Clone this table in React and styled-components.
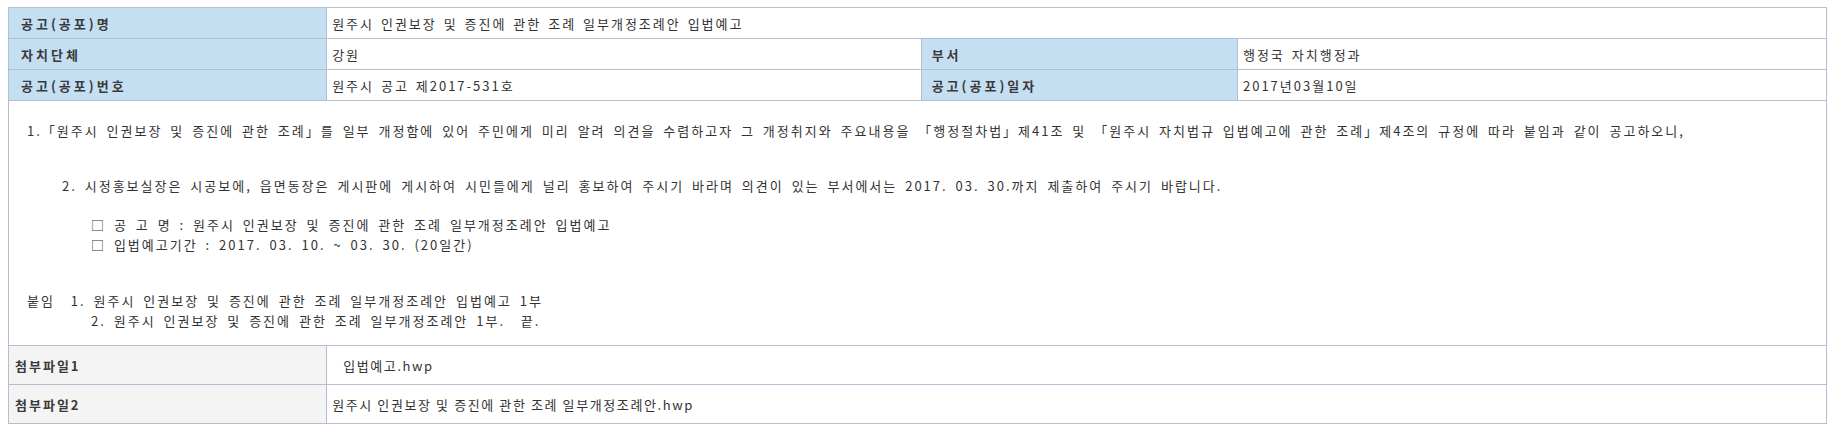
import styled, { createGlobalStyle } from "styled-components"

const GlobalStyle = createGlobalStyle`
  body {
    margin: 7px 8px;
    background: #ffffff;
    font-family: "Noto Sans CJK KR", "Noto Sans", sans-serif;
    color: #333333;
  }
`

const Sheet = styled.table`
  width: 100%;
  border-collapse: collapse;
  table-layout: fixed;
  border: 1px solid #b3bfd1;
`

const Label = styled.th`
  height: 30px;
  padding: 0 0 0 ${(p) => p.$pad || 12}px;
  border: 1px solid #b3bfd1;
  background: ${(p) => (p.$grey ? "#f4f4f4" : "#c5dff2")};
  color: #3a3a3a;
  font-size: 13px;
  font-weight: 700;
  text-align: left;
  letter-spacing: ${(p) => (p.$grey ? 2 : 3)}px;
`

const Value = styled.td`
  height: 30px;
  padding: 0 0 0 ${(p) => p.$pad || 5}px;
  border: 1px solid #b3bfd1;
  color: #333333;
  font-size: 13px;
  letter-spacing: ${(p) => (p.$file ? 1.6 : 2)}px;
  word-spacing: ${(p) => (p.$file ? 0 : 2)}px;
  white-space: nowrap;
`

const FileRow = styled.tr`
  th,
  td {
    height: 38px;
  }
`

const Body = styled.td`
  padding: 20px 18px 14px;
  border: 1px solid #b3bfd1;
  font-size: 13px;
  color: #333333;
  letter-spacing: 2px;
  word-spacing: 3px;
`

const Line = styled.p`
  margin: ${(p) => p.$top || 0}px 0 0 ${(p) => p.$indent || 0}px;
  line-height: 20px;
  white-space: pre;
`

export default function App() {
  return (
    <>
      <GlobalStyle />
      <Sheet>
        <colgroup>
          <col style={{ width: "17.5%" }} />
          <col style={{ width: "32.7%" }} />
          <col style={{ width: "17.4%" }} />
          <col style={{ width: "32.4%" }} />
        </colgroup>
        <tbody>
          <tr>
            <Label>공고(공포)명</Label>
            <Value colSpan={3}>원주시 인권보장 및 증진에 관한 조례 일부개정조례안 입법예고</Value>
          </tr>
          <tr>
            <Label>자치단체</Label>
            <Value>강원</Value>
            <Label $pad={10}>부서</Label>
            <Value>행정국 자치행정과</Value>
          </tr>
          <tr>
            <Label>공고(공포)번호</Label>
            <Value>원주시 공고 제2017-531호</Value>
            <Label $pad={10}>공고(공포)일자</Label>
            <Value>2017년03월10일</Value>
          </tr>
          <tr>
            <Body colSpan={4}>
              <Line>1.「원주시 인권보장 및 증진에 관한 조례」를 일부 개정함에 있어 주민에게 미리 알려 의견을 수렴하고자 그 개정취지와 주요내용을 「행정절차법」제41조 및 「원주시 자치법규 입법예고에 관한 조례」제4조의 규정에 따라 붙임과 같이 공고하오니,</Line>
              <Line $top={35} $indent={35}>2. 시정홍보실장은 시공보에, 읍면동장은 게시판에 게시하여 시민들에게 널리 홍보하여 주시기 바라며 의견이 있는 부서에서는 2017. 03. 30.까지 제출하여 주시기 바랍니다.</Line>
              <Line $top={19} $indent={64}>□ 공 고 명 : 원주시 인권보장 및 증진에 관한 조례 일부개정조례안 입법예고</Line>
              <Line $indent={64}>□ 입법예고기간 : 2017. 03. 10. ~ 03. 30. (20일간)</Line>
              <Line $top={36}>붙임  1. 원주시 인권보장 및 증진에 관한 조례 일부개정조례안 입법예고 1부</Line>
              <Line $indent={64}>2. 원주시 인권보장 및 증진에 관한 조례 일부개정조례안 1부.  끝.</Line>
            </Body>
          </tr>
          <FileRow>
            <Label $grey $pad={6}>첨부파일1</Label>
            <Value colSpan={3} $pad={16} $file>입법예고.hwp</Value>
          </FileRow>
          <FileRow>
            <Label $grey $pad={6}>첨부파일2</Label>
            <Value colSpan={3} $file>원주시 인권보장 및 증진에 관한 조례 일부개정조례안.hwp</Value>
          </FileRow>
        </tbody>
      </Sheet>
    </>
  )
}
